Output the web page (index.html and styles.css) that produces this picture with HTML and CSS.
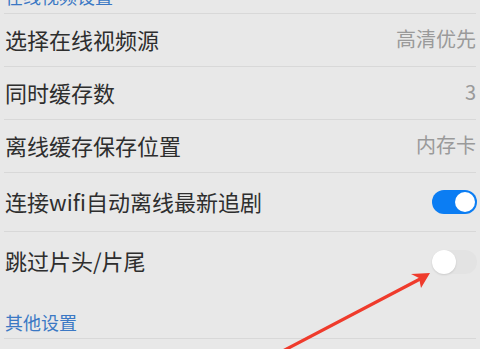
FILE: index.html
```html
<!DOCTYPE html>
<html lang="zh-CN">
<head>
<meta charset="UTF-8">
<title>设置</title>
<link rel="stylesheet" href="styles.css">
</head>
<body>

<div class="settings">
    <div class="section-title first">在线视频设置</div>
    <div class="row"><span class="label">选择在线视频源</span><span class="value">高清优先</span></div>
    <div class="row"><span class="label">同时缓存数</span><span class="value">3</span></div>
    <div class="row"><span class="label">离线缓存保存位置</span><span class="value">内存卡</span></div>
    <div class="row tall"><span class="label">连接wifi自动离线最新追剧</span><span class="switch on"></span></div>
    <div class="row tall last"><span class="label">跳过片头/片尾</span><span class="switch"></span></div>
    <div class="section-title">其他设置</div>
</div>

<svg class="arrow" width="480" height="349" viewBox="0 0 480 349">
    <line x1="279" y1="353" x2="422" y2="278" stroke="#ef3b2c" stroke-width="3.2" stroke-linecap="round"/>
    <polygon points="430,273 411,274 419,278 421,288" fill="#ef3b2c"/>
</svg>

</body>
</html>
```

FILE: styles.css
```css
body {
    margin: 0;
    background: #e8e8e8;
    font-family: "Noto Sans CJK SC", "Noto Sans", sans-serif;
    overflow: hidden;
}
.settings {
    padding: 0 4px;
}
.section-title {
    color: #3b78c4;
    font-size: 18px;
    line-height: 24px;
    padding: 19px 1px 4px;
    border-bottom: 1px solid #d8d8d8;
}
.section-title.first {
    margin-top: -16px;
    padding: 0 1px 5px;
}
.row {
    display: flex;
    align-items: center;
    justify-content: space-between;
    height: 52px;
    padding-left: 1px;
    border-bottom: 1px solid #d8d8d8;
}
.row.tall { height: 58px; }
.row.last {
    border-bottom: none;
    height: 59px;
}
.label {
    font-size: 22px;
    color: #2e2e2e;
    margin-bottom: 3px;
}
.value {
    font-size: 20px;
    color: #9a9a9a;
    margin-bottom: 3px;
}
.switch {
    position: relative;
    width: 45px;
    height: 24px;
    border-radius: 12px;
    background: #e3e3e3;
    margin-right: -1px;
}
.switch::after {
    content: "";
    position: absolute;
    top: 0;
    left: 0;
    width: 24px;
    height: 24px;
    border-radius: 50%;
    background: #fff;
    box-shadow: 0 1px 2px rgba(0, 0, 0, 0.12);
}
.switch.on { background: #0b7df3; }
.switch.on::after {
    top: 2px;
    left: 23px;
    width: 20px;
    height: 20px;
    box-shadow: none;
}
.arrow {
    position: absolute;
    top: 0;
    left: 0;
    pointer-events: none;
}
```
